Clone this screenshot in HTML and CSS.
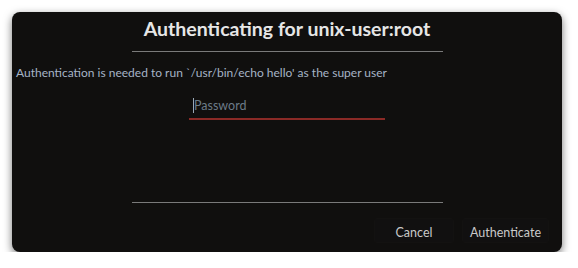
FILE: index.html
```html
<!DOCTYPE html>
<html>
<head>
<meta charset="utf-8">
<link rel="stylesheet" href="styles.css">
</head>
<body>
<div class="dialog">
  <div class="title">Authenticating for unix-user:root</div>
  <div class="sep"></div>
  <div class="desc">Authentication is needed to run `/usr/bin/echo hello' as the super user</div>
  <div class="field"><span class="caret"></span><span class="placeholder">Password</span></div>
  <div class="spacer"></div>
  <div class="sep"></div>
  <div class="actions">
    <button class="btn cancel">Cancel</button>
    <button class="btn ok">Authenticate</button>
  </div>
</div>
</body>
</html>
```
FILE: styles.css
```css
html, body {
  margin: 0;
  padding: 0;
  background: #ffffff;
}
body {
  padding: 12px 0 0 12px;
  font-family: Lato, "Liberation Sans", sans-serif;
}
.dialog {
  width: 550px;
  height: 240px;
  box-sizing: border-box;
  background: #100f0e;
  border-radius: 8px;
  box-shadow: 0 3px 9px rgba(0,0,0,0.55);
  display: flex;
  flex-direction: column;
  align-items: center;
  padding-top: 4px;
}
.title {
  font-size: 19.5px;
  font-weight: bold;
  color: #e6e6e6;
  line-height: 26px;
  height: 26px;
}
.sep {
  width: 311px;
  height: 1px;
  background: #7a7a7a;
  margin-top: 9px;
  flex: none;
}
.desc {
  align-self: flex-start;
  margin-left: 4px;
  margin-top: 13px;
  font-size: 12px;
  line-height: 16px;
  color: #a6b4c6;
}
.field {
  margin-top: 17px;
  width: 192px;
  height: 20px;
  border-bottom: 2px solid #8b2a26;
  display: flex;
  align-items: flex-start;
  padding-left: 4px;
  box-sizing: content-box;
}
.caret {
  width: 1px;
  height: 15px;
  margin-top: 0;
  background: #9aa8b6;
}
.placeholder {
  font-size: 12.5px;
  line-height: 15px;
  color: #6c7b88;
  margin-left: 0;
}
.spacer {
  flex: 1;
}
.actions {
  align-self: flex-end;
  display: flex;
  gap: 8px;
  margin-top: 15px;
  margin-right: 13px;
  margin-bottom: 9px;
}
.btn {
  font-family: Lato, "Liberation Sans", sans-serif;
  font-size: 12.5px;
  color: #c9c9c9;
  background: #111010;
  border: 1px solid #131211;
  border-radius: 3px;
  height: 25px;
  padding: 3px 0 0 0;
}
.cancel { width: 80px; }
.ok { width: 87px; }
```
